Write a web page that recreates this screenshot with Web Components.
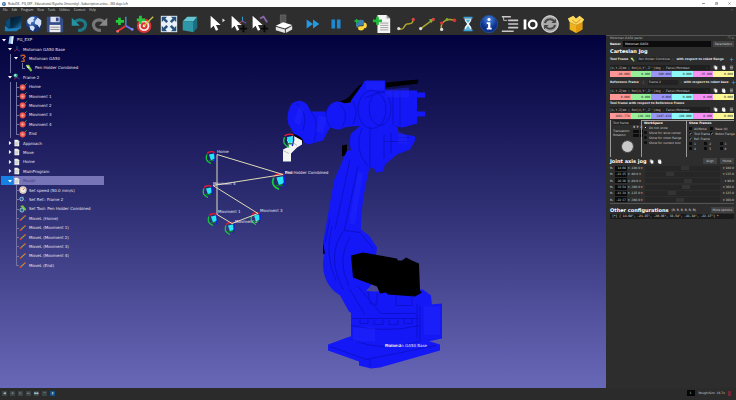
<!DOCTYPE html>
<html lang="en">
<head>
<meta charset="utf-8">
<title>RoboDK</title>
<style>
  html, body { height: 100%; }
  body { margin: 0; background: #2a2a2a; color: #e4e4e4; font: 4px/1 "DejaVu Sans", sans-serif; overflow: hidden; }
</style>
</head>
<body>
<robot-app></robot-app>
<script>
const RESET = `
  * { box-sizing: border-box; }
  button, input, select { font: inherit; color: inherit; margin: 0; padding: 0; border: 0; background: none; border-radius: 0; min-width: 0; }
  select { appearance: none; display: block; }
  svg { display: block; }
`;
function define(name, template) {
  customElements.define(name, class extends HTMLElement {
    connectedCallback() {
      if (this.shadowRoot) return;
      const root = this.attachShadow({ mode: "open" });
      const html = typeof template === "function" ? template(this) : template;
      const [css, markup] = html.split("~~");
      root.innerHTML = `<style>${RESET}${css}</style>${markup}`;
    }
  });
}

const cursor = `<path d="M4 2v14l3.300-3 2.500 5.500 2.600-1.200-2.500-5.300H15z" fill="#fff"/>`;
const page = `<path d="M4 2h9l4 4v14H4z" fill="#f4f4f4"/><path d="M13 2v4h4z" fill="#aaa"/><path d="M6 9h9M6 11.500h9M6 14h9M6 16.500h7" stroke="#999" stroke-width="1"/>`;
const axes = `<path d="M11 12V3" stroke="#39c" stroke-width="1.500"/><path d="M11 12l8 5" stroke="#55f" stroke-width="1.500"/><path d="M11 12l-8 5" stroke="#e33" stroke-width="1.500"/>`;
const ICONS = {
  station: `<defs><linearGradient id="g" x2="1" y2="1"><stop offset="0" stop-color="#02101c"/><stop offset=".6" stop-color="#06304e"/><stop offset="1" stop-color="#2c91cc"/></linearGradient></defs><path d="M3 8l5-4 12-2v14l-4 1-13 1z" fill="url(#g)"/><path d="M3 8l5-4v10l-5 4z" fill="#0b4a75"/><path d="M2 13l4 3 13-1-4 4-13 0z" fill="#1d7db8"/>`,
  globe: `<defs><radialGradient id="g" cx=".4" cy=".3"><stop offset="0" stop-color="#4f86d8"/><stop offset="1" stop-color="#15336f"/></radialGradient></defs><circle cx="11" cy="11" r="9" fill="url(#g)"/><path d="M3.500 7Q6 3 10 3l2 1-2 2 1 2-3 1-1 3-3-2zM12 8l3-4 4 3v4l-2 4-2-3-3-1zM6 13l4 0 2 2-2 4-3-2z" fill="#d5e2f6"/>`,
  save: `<path d="M2 3h15l3 3v14H2z" fill="#354d89"/><path d="M6 3h10v6H6z" fill="#dfe6f2"/><path d="M12 4h3v4h-3z" fill="#354d89"/><path d="M5 12h12v8H5z" fill="#eee"/><path d="M6 14.500h10M6 17h10" stroke="#889"/>`,
  undo: `<path d="M6 9c5-5 13-2 12 4-1 4-4 5-8 5" fill="none" stroke="#1d7888" stroke-width="3.500"/><path d="M3 4v9h9z" fill="#2492a2"/>`,
  redo: `<path d="M16 9C11 4 3 7 4 13c1 4 4 5 8 5" fill="none" stroke="#777" stroke-width="3.500"/><path d="M19 4v9h-9z" fill="#888"/>`,
  frame: `<path d="M13 13V3" stroke="#49c" stroke-width="1.500"/><path d="M13 13l7 4" stroke="#67f" stroke-width="2"/><path d="M13 13l-9 6" stroke="#e33" stroke-width="2"/><path d="M6 4v8M2 8h9" stroke="#25c93c" stroke-width="3"/><circle cx="20" cy="17" r="1.500" fill="#88f"/><circle cx="4" cy="19" r="1.500" fill="#f66"/>`,
  target: `<circle cx="10" cy="13" r="8" fill="#d33"/><circle cx="10" cy="13" r="5.800" fill="#f5e6e6"/><circle cx="10" cy="13" r="3.800" fill="#d33"/><circle cx="10" cy="13" r="1.500" fill="#fff"/><path d="M10 13l10-10" stroke="#c5c540" stroke-width="1.500"/><path d="M6 2v9M2 6.500h9" stroke="#25c93c" stroke-width="3"/>`,
  fit: `<path d="M2 2h18v18H2z" fill="#e8eff6"/><path d="M3 3h6L7 5l3 3-2 2-3-3-2 2zM19 3v6l-2-2-3 3-2-2 3-3-2-2zM3 19v-6l2 2 3-3 2 2-3 3 2 2zM19 19h-6l2-2-3-3 2-2 3 3 2-2z" fill="#26517d"/>`,
  cube: `<path d="M3 8l5-5h11l-4 5z" fill="#63c6d2"/><path d="M3 8h12v12l-12-2z" fill="#2f98a8"/><path d="M15 8l4-5v12l-4 5z" fill="#1b6e7d"/>`,
  select: cursor + `<path d="M17 5l3 2-3 2z" fill="#ddd"/>`,
  moveframe: cursor + `<path d="M16 8V3" stroke="#3ad" /><path d="M16 8l4 2" stroke="#66f"/><path d="M16 8l-4 2" stroke="#e44"/><path d="M17 12v8M13 16h8" stroke="#080808" stroke-width="2"/>`,
  movetool: cursor + `<path d="M12 5l4-2 4 6" stroke="#86a" stroke-width="2" fill="none"/><path d="M17 12v8M13 16h8" stroke="#080808" stroke-width="2"/>`,
  collision: `<path d="M7 1h6v9H7z" fill="#555" stroke="#777" stroke-width=".6"/><path d="M2 13l8-4 10 3-8 4z" fill="#fff"/><path d="M2 14l10 3v4L2 18zM13 17l7-4v4l-7 4z" fill="#e4e4e4"/>`,
  fast: `<path d="M4 6l7 5-7 5zM11 6l7 5-7 5z" fill="#2698de"/>`,
  pause: `<path d="M6 6h4v10H6zM12 6h4v10h-4z" fill="#1f88cf"/>`,
  python: `<g transform="translate(3 3) scale(.8)"><path d="M6 8V6q0-2 4-2t4 2v4q0 2-3 2H8q-2 0-2 3-3 0-3-4t3-3z" fill="#3c7fb1"/><path d="M14 8q4 0 4 4t-4 4v1q0 2-4 2t-4-2v-2q0-2 3-2h3q2 0 2-3z" fill="#fbd43c"/><path d="M4 3v6M1 6h6" stroke="#2b4" stroke-width="2"/></g>`,
  program: `<path d="M6 1h10l4 4v16H6z" fill="#f4f4f4"/><path d="M16 1v4h4z" fill="#999"/><path d="M9 10h9M9 12.500h9M9 15h9M9 17.500h9" stroke="#999"/><path d="M6 3v9M1 7.500h10" stroke="#1fba3a" stroke-width="3"/>`,
  movej: `<path d="M3 16c7 3 5-4 9-5s6 1 7-5" fill="none" stroke="#aba32c" stroke-width="1.700"/><circle cx="3" cy="16" r="1.800" fill="#ddd"/><circle cx="19" cy="6" r="1.800" fill="#d44"/>`,
  movel: `<path d="M4 16L18 6" stroke="#aba32c" stroke-width="1.700"/><circle cx="4" cy="16" r="1.800" fill="#ddd"/><path d="M13 6l6-1-3 5z" fill="#7b3"/><circle cx="18" cy="6" r="1.800" fill="#d44"/>`,
  movec: `<path d="M4 17C2 10 8 4 18 7" fill="none" stroke="#aba32c" stroke-width="1.700"/><circle cx="4" cy="17" r="1.800" fill="#ddd"/><circle cx="4" cy="10" r="1.800" fill="#d33"/><circle cx="10" cy="6" r="1.600" fill="#8a2"/><circle cx="18" cy="7" r="2" fill="#d33"/>`,
  wait: `<path d="M6 3h10v2H6zM6 17h10v2H6z" fill="#3a9fd5"/><path d="M7 5h8q0 3-3 6 3 3 3 6H7q0-3 3-6-3-3-3-6z" fill="#e8f6fd"/><path d="M8 6h6l-3 4zM8 17l3-4 3 4z" fill="#58b5dd"/>`,
  info: `<defs><radialGradient id="g" cy=".25"><stop offset="0" stop-color="#4d88e4"/><stop offset="1" stop-color="#0b2f8e"/></radialGradient></defs><circle cx="11" cy="11" r="9.500" fill="url(#g)" stroke="#24508e"/><circle cx="11" cy="6" r="1.700" fill="#fff"/><path d="M8.500 9H12.500v6h1.500v2H8.500v-2H10v-4H8.500z" fill="#fff"/>`,
  call: `<path d="M2 3h10M9 7h11M9 11h11M9 15h11M2 19h13" stroke="#c9c9c9" stroke-width="1.700"/><path d="M4 3v4l4 0" fill="none" stroke="#c9c9c9"/>`,
  io: `<path d="M4 6h3v11H4z" fill="#fff"/><ellipse cx="14" cy="11.500" rx="4.200" ry="4.200" fill="none" stroke="#fff" stroke-width="2.500"/>`,
  sync: `<circle cx="11" cy="11" r="9.500" fill="#a8a8a8"/><path d="M5.500 10a5.500 5 0 0 1 10-2M16.500 12a5.500 5 0 0 1-10 2" fill="none" stroke="#444" stroke-width="2.200"/><path d="M17.500 5v5h-5zM4.500 17v-5h5z" fill="#444"/><circle cx="11" cy="11" r="9" fill="none" stroke="#ddd"/>`,
  box: `<path d="M4 9l7 3 7-3v8l-7 4-7-4z" fill="#f0b21c"/><path d="M11 12l7-3v8l-7 4z" fill="#e09a12"/><path d="M4 9L2 5l6-3 3 3 4-3 5 4-2 3-7 3z" fill="#ffd75a"/><path d="M7 7l4 3 5-4" stroke="#d18b12" fill="none"/>`,
  root: `<path d="M7 1h11l-2 20H4z" fill="#8cc4ec"/><path d="M13 1h5l-2 20h-5z" fill="#e5f3fc"/>`,
  axes,
  arm: `<path d="M5 4l9-1 3 4-6 5 3 3v5H6" fill="none" stroke="#c4622d" stroke-width="3.500"/><circle cx="6" cy="5" r="2.500" fill="#666"/>`,
  tool: `<path d="M2 3l9-1 9 15-4 4-7-8z" fill="#79c143"/><path d="M3 3l8 5 2 5-7-3z" fill="#dff0cc"/>`,
  frame2: axes + `<circle cx="7" cy="7" r="5.500" fill="#3aa79a"/><circle cx="6" cy="6" r="2.500" fill="#c6eee6"/>`,
  point: `<path d="M15 7l6-6" stroke="#2d4" stroke-width="2"/><circle cx="10" cy="12" r="8.500" fill="#e0443c"/><path d="M6 12h8M10 8v8" stroke="#fbd5d0" stroke-width="1.500"/><circle cx="10" cy="12" r="5" fill="none" stroke="#f7b5b0"/>`,
  page,
  speed: `<circle cx="11" cy="11" r="10" fill="#f3ece4"/><circle cx="11" cy="11" r="8" fill="none" stroke="#d9a37a" stroke-width="1.500"/><path d="M11 11l4-5" stroke="#c33" stroke-width="2"/>`,
  setref: axes + `<circle cx="7" cy="11" r="5" fill="#2b5a90" stroke="#bcd4f0" stroke-width="2"/>`,
  settool: `<path d="M3 3l8-2 9 11-3 4z" fill="#79c143"/><circle cx="8" cy="14" r="5.500" fill="#2b6a90" stroke="#bce8d8" stroke-width="2"/>`,
  line: `<path d="M4 17L17 5" stroke="#b9a52e" stroke-width="3"/><circle cx="4" cy="17" r="2.500" fill="#c43"/><circle cx="17" cy="5" r="2.500" fill="#c43"/>`,
  copy: `<path d="M3 2h10v13H3z" fill="#aaa"/><path d="M8 6h11v14H8z" fill="#fff"/>`,
  paste: `<path d="M4 3h14v16H4z" fill="#ddd"/><path d="M8 1h6v4H8z" fill="#777"/><path d="M10 9h9v12h-9z" fill="#fff"/>`,
  menu: `<path d="M4 5h14M4 11h14M4 17h14" stroke="#bbb" stroke-width="3"/>`,
  chev: `<path d="M4 8l7 7 7-7" fill="none" stroke="#bbb" stroke-width="3"/>`,
  plus: `<path d="M11 3v16M3 11h16" stroke="#3b8fd0" stroke-width="3"/>`,
  down: `<path d="M0 5h22L11 19z" fill="#fff"/>`,
  right: `<path d="M5 0v22l14-11z" fill="#fff"/>`
};
define("app-icon", el => `:host{display:block;flex:none;width:var(--icon,20px);height:var(--icon,20px)} svg{width:100%;height:100%}
  ~~<svg viewBox="0 0 22 22" aria-hidden="true">${ICONS[el.getAttribute("name")]}</svg>`);

define("title-bar", `:host{display:flex;align-items:center;height:7px;background:#fff;color:#222;font:3px/4px "Open Sans","Noto Sans",sans-serif;padding:0 4px 0 2px;gap:2px}
  h1{font:inherit;margin:0;flex:1;white-space:nowrap} .logo{width:4px;height:4px} button{width:5px;height:5px;color:#333} .win{display:flex;gap:8px} .win svg{width:3px;height:3px;margin:auto}
  ~~<svg class="logo" viewBox="0 0 10 10"><circle cx="5" cy="5" r="5" fill="#366d9e"/><path d="M2 3l3 1-1 4zM6 2l3 2-2 3z" fill="#cfe3ef"/></svg>
  <h1>RoboDK - PG_EXP - Educational (Kyushu University) - Subscription active - 365 days left</h1>
  <div class="win"><button aria-label="Minimize"><svg viewBox="0 0 10 10"><path d="M0 5h10" stroke="#555" stroke-width="2"/></svg></button>
  <button aria-label="Restore"><svg viewBox="0 0 10 10"><path d="M1 3h6v6H1zM3 3V1h6v6H7" fill="none" stroke="#555" stroke-width="1.500"/></svg></button>
  <button aria-label="Close"><svg viewBox="0 0 10 10"><path d="M1 1l8 8M9 1L1 9" stroke="#555" stroke-width="1.500"/></svg></button></div>`);

define("menu-bar", `:host{display:flex;align-items:center;height:6px;background:#2e2e2e;color:#ddd;font:3px/4px "Open Sans","Noto Sans",sans-serif;padding:0 3px;gap:4px}
  button:last-child{margin-left:auto;color:#888}
  ~~${["File","Edit","Program","View","Tools","Utilities","Connect","Help"].map(t => `<button>${t}</button>`).join("")}<button aria-label="Close view">×</button>`);

define("tool-group", `:host{display:flex;gap:var(--gap,1px);flex:none}~~<slot></slot>`);
define("tool-button", el => `:host{display:block} button{display:block} 
  ~~<button aria-label="${el.getAttribute("icon")}"><app-icon name="${el.getAttribute("icon")}"></app-icon></button>`);
const group = (names, space, gap = 1) => `<tool-group style="margin-left:${space}px;--gap:${gap}px">${names.split(" ").map(n => `<tool-button icon="${n}"></tool-button>`).join("")}</tool-group>`;
define("tool-bar", `:host{display:flex;align-items:center;height:22px;background:#2e2e2e}
  ~~${group("station globe save",3)}${group("undo redo",4)}${group("frame target",4)}${group("fit cube",4)}${group("select moveframe movetool",7)}${group("collision",5)}${group("fast",9)}${group("pause",3)}${group("python program",5)}${group("movej movel movec",4)}${group("wait info",0)}${group("call io sync",1,0)}${group("box",6)}`);

define("tree-row", el => {
  const level = +el.getAttribute("level"), open = el.getAttribute("state"), last = el.hasAttribute("last");
  const col = n => `<i class="${n}"></i>`;
  let lead = "";
  for (let i = 1; i < level; i++) lead += col((el.getAttribute("rails") || "")[i - 1] === "1" ? "rail" : "");
  return `:host{display:flex;align-items:center;min-height:0;--icon:8px;white-space:nowrap;color:#e6e6f4}
  i,b{display:block;width:6px;align-self:stretch;flex:none;position:relative}
  .rail::before,.leaf::before{content:"";position:absolute;left:3px;top:0;bottom:0;border-left:1px solid #7474a4}
  .end::before{bottom:50%} .leaf::after{content:"";position:absolute;left:3px;right:0;top:50%;border-top:1px solid #7474a4}
  b{display:grid;place-items:center;--icon:4px} span{padding-left:2px}
  :host([selected]){background:linear-gradient(90deg,#1681e2 0 12px,#7774b8 12px);color:#404080;width:103px}
  ~~${lead}${open ? `<b><app-icon name="${open}"></app-icon></b>` : `<i class="leaf ${last ? "end" : ""}"></i>`}<app-icon name="${el.getAttribute("icon")}"></app-icon><span><slot></slot></span>`;
});
const row = (level, icon, text, state = "", extra = "") => `<tree-row role="treeitem" level="${level}" icon="${icon}" ${state ? `state="${state}"` : ""} ${extra}>${text}</tree-row>`;
define("station-tree", `:host{display:grid;grid-auto-rows:1fr;height:235px;padding-left:1px;width:120px;font:4px/5px "DejaVu Sans",sans-serif}
  ~~${row(1,"root","PG_EXP","down")}${row(2,"axes","Motoman GA50 Base","down")}${row(3,"arm","Motoman GA50","down",'rails="01"')}${row(4,"tool","Pen Holder Combined","",'rails="010" last')}
  ${row(2,"frame2","Frame 2","down")}${["Home","Movment 1","Movment 2","Movment 3","Movment 4"].map(t => row(3,"point",t,"",'rails="01"')).join("")}${row(3,"point","End","",'rails="01" last')}
  ${row(2,"page","Approach","right")}${row(2,"page","Move","right")}${row(2,"page","Home","right")}${row(2,"page","MainProgram","right")}${row(2,"page","Rough","down","selected")}
  ${row(3,"speed","Set speed (50.0 mm/s)")}${row(3,"setref","Set Ref.: Frame 2")}${row(3,"settool","Set Tool: Pen Holder Combined")}
  ${["Home","Movment 1","Movment 2","Movment 3","Movment 4"].map(t => row(3,"line",`MoveL (${t})`)).join("")}${row(3,"line","MoveL (End)","","last")}`);

const marker = (x, y, s = 1) => `<g transform="translate(${x} ${y}) scale(${s})" fill="none"><path d="M-2-3L3-4l1 5-4 2z" fill="#26e6f4"/><path d="M-4-3q-3 6 4 9" stroke="#17c83c" stroke-width="1.300"/><path d="M-4-4q3-3 8-1" stroke="#ec1830" stroke-width="1.300"/><path d="M4-5q1 5-1 10" stroke="#1220d4" stroke-width="1.300"/><path d="M-2 3l5 0" stroke="#0a7a2c" stroke-width="1.200"/></g>`;
define("robot-view", `:host{display:block;width:100%;height:100%} svg{width:100%;height:100%;font:4px "DejaVu Sans",sans-serif} text{fill:#e8e8f4}
  ~~<svg viewBox="0 35 606 352" preserveAspectRatio="xMidYMid meet" role="img" aria-label="Robot station">
  <g fill="#1418f6">
    <path d="M339 101q9-2 13-8 7-10 16-12l-1 9-16 11-10 5z" fill="#000"/>
    <path d="M342 145l5-1v10l-5 2z" fill="#000"/>
    <path d="M323 244l4-2v14l-4-3z" fill="#000"/>
    <path d="M347 150l-13 30-11 62 6 34 34 2-2-47q-1-24 8-62l2-20z"/>
    <path d="M365 80h20v10h32v33l-14 4-14-2-24 2-14-7v-20l10-14z"/>
    <path d="M414 92h11v5h-11zM413 111h12v5h-12z"/>
    <path d="M386 82l32-3v4l-32 4z" fill="#000"/>
    <path d="M332 104l20-2 14-5v28l-15 1-15 2-12-2z"/>
    <path d="M292 103q8-6 15 1l4 7 14 0 6 14-8 15-15 4-11-6-9-15q-2-12 4-20z"/>
    <ellipse cx="338" cy="115" rx="12" ry="14"/><ellipse cx="376" cy="108" rx="18" ry="21"/>
    <path d="M351 133l12-10h25l10 4v6l13 2 4 1v4l-5 9-13 5-12 10-2 7-7 1-2-4-12-4q-16-12-11-31z"/>
    <ellipse cx="350" cy="264" rx="27" ry="33"/><path d="M346 231l15-2 8 6 8 12-3 25z"/>
    <path d="M339 293l10 18 7 5h64l12-11-1-10-8-6-49 2-25-2z"/>
    <path d="M418 305l24-2v35l-24 5z"/><path d="M351 312h70v31h-70z"/>
    <path d="M328 344l22-8 70 2 20 6v6l-60 17-9 1-12-3 0-4-31-11z"/>
  </g>
  <path d="M351 255l12-3 34 6 1 2 4 0 4-3 6 3 7 3 1 27 2 2-7 4-27-2-2-2-6 1-3-7-24-9z" fill="#000"/>
  <g fill="none" stroke="#0d10cc" stroke-width="1">
    <ellipse cx="380" cy="108" rx="11" ry="17"/><ellipse cx="372" cy="109" rx="14" ry="19"/><path d="M340 104q10 9 2 23M353 101q6 10 0 23M330 104q-8 10 0 22M311 111q9 10 3 30M296 103q13 8 7 27M393 90v34M400 90v35M365 97l22-7"/>
    <path d="M362 127q-9 22 6 39M370 126v42M384 134v24M391 132v21M384 141h23M398 137h12"/>
    <path d="M350 159l-15 70M358 166l-14 65M332 226q-8 28 4 54M343 231q-17 25 0 58M350 236q-14 24-1 50M345 230l15 2 13 16M330 218l-5 25"/>
    <path d="M350 289l15 25M357 285l24 28h35M368 291l2 12 7 1v-11M396 295v10h16v-10M352 318h67M351 325q34 8 69 0M360 318v5h8v-5M374 319v5h9v-5M389 319v5h9v-5M404 318v5h8v-5M351 339q33 14 70 1M420 305v34M330 346l36 13 70-14M370 358v8M417 303v35"/>
  </g>
  <g fill="#2428ff" opacity=".4"><path d="M366 81h18v8h-18zM385 89l24-2v10h-24zM358 170l5 3-8 51-6-1zM398 130l9 5v8h-9zM353 327h22v14h-22zM424 306h16v28h-16zM319 115l8 2-4 16-7-2zM299 105l5 3-4 17-6-3z"/></g>
  <ellipse cx="297" cy="138" rx="7" ry="3" transform="rotate(32 297 138)" fill="#000"/>
  <path d="M287 139l6-4 9 5 0 4-5 3-6 6v8h-8v-12l6-3z" fill="#f4f4f4"/><path d="M289 139l8 6M283 150l6 3" stroke="#bbb" fill="none"/>
  ${marker(289,140,1.1)}
  ${marker(211,157)}${marker(208,191)}${marker(213,219)}${marker(230,228)}${marker(256,218)}${marker(279,181,1.3)}
  <path d="M217 154l66 20-70 11 45 28-26 10-15-9z" fill="none" stroke="#dedcb4" stroke-width="1"/>
  <text x="217" y="152">Home</text><text x="213" y="184">Movment 4</text><text x="218" y="212">Movment 1</text><text x="235" y="222">Movment 2</text><text x="260" y="211">Movment 3</text>
  <text x="285" y="173">End</text><text x="285" y="173">Pen Holder Combined</text><text x="385" y="346">Frame 2</text><text x="385" y="346">Motoman GA50 Base</text>
  </svg>`);

define("pose-fields", el => `:host{display:grid;gap:1px}
  .head{display:flex;align-items:center;gap:3px;height:5px;--icon:5px} .fmt{flex:1;display:flex;align-items:center;background:#1f1f1f;height:5px;--icon:2px;padding-right:2px} select{flex:1;height:5px;color:#ccc;font-family:"DejaVu Sans Mono",monospace;font-size:3px;white-space:nowrap;overflow:hidden}
  .vals{display:grid;grid-template-columns:repeat(6,1fr);height:6px} .vals input{color:#222;text-align:right;padding-right:1px;font:3px/6px "DejaVu Sans Mono",monospace;width:100%;height:6px}
  ~~<div class="head"><div class="fmt"><select aria-label="Pose format"><option>[X,Y,Z]mm | Rot[X,Y',Z'']deg - Fanuc/Motoman</option></select><app-icon name="chev"></app-icon></div><app-icon name="copy"></app-icon><app-icon name="paste"></app-icon><app-icon name="menu"></app-icon></div>
  <div class="vals">${el.getAttribute("values").split(",").map((v, i) => `<input aria-label="${["X","Y","Z","rX","rY","rZ"][i]}" value="${v}" style="background:${["#ff9696","#96f09a","#9896f8","#8cf8f8","#f890f4","#fcf896"][i]}">`).join("")}</div>`);

define("frame-choice", el => `:host{display:flex;align-items:center;height:6px;font-weight:bold;--icon:5px;gap:2px;white-space:nowrap} label{display:flex;align-items:center;gap:2px} select{width:var(--w);height:5px;font-weight:normal;color:#ccc;background:#222;padding-left:1px} .add{margin-left:auto} .c{--icon:2px} 
  ~~<label>${el.getAttribute("label")} <app-icon name="${el.getAttribute("icon")}"></app-icon><select style="--w:${el.getAttribute("w")}px"><option>${el.getAttribute("value")}</option></select></label><app-icon class="c" name="chev"></app-icon><span><slot></slot></span><app-icon class="add" name="plus"></app-icon>`);

const tick = (type, label, on) => `<label><input type="${type}" name="w" ${on ? "checked" : ""}>${label}</label>`;
define("jog-options", `:host{display:grid;grid-template-columns:31px 45px 1fr;height:37px;font-size:3px;line-height:4px;color:#ccc}
  section{padding:0 0 0 2px;border-left:1px solid #999;min-width:0} section:first-child{border:0;padding:0} h3{font-size:3px;line-height:4px;margin:0;color:#fff}
  label{display:flex;align-items:center;gap:2px;white-space:nowrap} input{appearance:none;width:3px;height:3px;background:#0c0c0c;flex:none}
  input[type=checkbox]{display:grid;place-items:center} input[type=checkbox]:checked::before{content:"✓";font-size:4px;line-height:3px;color:#fff}
  input[type=radio]{border-radius:50%} input[type=radio]:checked{background:#eee;border:1px solid #111}
  .work label{height:5px} .work,.show{border-top:1px solid #999} .show{display:grid;grid-template-columns:1fr 1fr;align-content:start;grid-auto-rows:5px}.show h3{grid-column:1/-1}
  .nums{grid-column:1/-1;display:grid;grid-template-columns:repeat(3,1fr);grid-auto-rows:5px}
  table{border-spacing:0;width:30px} td,th{padding:0;font-weight:bold;text-align:center;height:4px} th:first-child{text-align:left;font-weight:normal} td input{margin:auto}
  .sel{display:flex;align-items:center;--icon:2px;justify-content:space-between;background:#222;height:5px} .sel select{flex:1}
  .knob{width:13px;height:13px;border-radius:50%;background:#c9c9c9;border:1px dotted #777;margin:3px 0 0 8px;background-clip:padding-box}
  ~~<section><div class="sel"><select aria-label="Jog frame"><option>Tool frame</option></select><app-icon name="chev"></app-icon></div>
  <table><tr><th></th><th>X</th><th>Y</th><th>Z</th></tr>${["Translation","Rotation"].map(t => `<tr><th>${t}</th>${["X","Y","Z"].map(a => `<td><input type="checkbox" aria-label="${t} ${a}"></td>`).join("")}</tr>`).join("")}</table><div class="knob"></div></section>
  <section class="work"><h3>WorkSpace</h3>${tick("radio","Do not show",1)}${tick("radio","Show for wrist center")}${tick("radio","Show for robot flange")}${tick("radio","Show for current tool")}</section>
  <section class="show"><h3>Show Frames</h3>${tick("checkbox","All/None")}${tick("checkbox","Base (0)")}${tick("checkbox","Tool Frame",1)}${tick("checkbox","Robot Flange",1)}${tick("checkbox","Ref. Frame",1)}<span></span><div class="nums">${[1,2,3,4,5,6].map(n => tick("checkbox",n)).join("")}</div></section>`);

const JOINTS = [["14.68",-180,180],["-21.15",-90,135],["20.36",-80,90],["33.54",-360,360],["-41.34",-125,125],["-22.17",-360,360]];
define("joint-rows", `:host{display:grid;grid-auto-rows:1fr;height:39px;font:3px/4px "DejaVu Sans",sans-serif;color:#ccc;border-bottom:1px solid #555}
  div{display:grid;grid-template-columns:4px 12px 16px 1fr 13px;gap:1px;align-items:center} .v{background:#0c0c0c;text-align:right;height:5px;width:100%;padding-right:1px}
  output{white-space:nowrap;text-align:right} output:first-of-type{text-align:left}
  input[type=range]{appearance:none;width:100%;height:5px;background:#262626} input[type=range]::-webkit-slider-thumb{appearance:none;width:8px;height:4px;background:#343434}
  ~~${JOINTS.map(([v, a, b], i) => `<div><label for="j${i}">θ${"₁₂₃₄₅₆"[i]}</label><input class="v" id="j${i}" value="${v}"><output>▾ ${a.toFixed(1)} ▾</output><input type="range" aria-label="Joint ${i + 1}" min="${a}" max="${b}" value="${v}"><output>▾ ${b.toFixed(1)}</output></div>`).join("")}`);

define("robot-panel", `:host{display:flex;flex-direction:column;background:#2d2d2d;padding:0 2px 0 4px;font:3px/4px "DejaVu Sans",sans-serif;border-top:1px solid #555}
  h2{margin:0;font-size:5px;line-height:6px;color:#fff} .dock{display:flex;justify-content:space-between;color:#bbb;height:5px;line-height:4px}
  .name{display:flex;align-items:center;gap:2px;height:6px} .name label{font-weight:bold;color:#fff} .name input{flex:1;height:6px;background:#0c0c0c;padding-left:2px}
  button{background:#414141;height:6px;padding:0 2px;white-space:nowrap;color:#ccc} h2.c{margin:1px 0 2px}
  pose-fields{margin-top:3px} frame-choice{margin-top:2px} .rel{font-weight:bold;height:4px;margin-top:1px;white-space:nowrap} .rel+pose-fields{margin-top:2px} jog-options{margin-top:1px}
  .bar{display:flex;align-items:center;gap:3px;--icon:5px;height:8px} .bar .r{margin-left:auto} .bar button{min-width:14px} .other{margin-top:2px}
  .list{background:#1a1a1a;height:5px;white-space:nowrap;overflow:hidden;font:3px/5px "DejaVu Sans Mono",monospace;padding-left:2px}
  .first{margin-top:0}
  ~~<div class="dock"><span>Motoman GA50 panel</span><span>❐ ×</span></div>
  <div class="name"><label for="n">Name:</label><input id="n" value="Motoman GA50"><button>Parameters</button></div>
  <h2 class="c">Cartesian Jog</h2>
  <frame-choice class="first" label="Tool Frame" icon="tool" value="Pen Holder Combined" w="33">with respect to robot flange</frame-choice>
  <pose-fields values="-80.000,0.000,300.000,0.000,-35.000,0.000"></pose-fields>
  <frame-choice label="Reference Frame" icon="axes" value="Frame 2" w="30">with respect to robot base</frame-choice>
  <pose-fields values="0.000,0.000,0.000,0.000,0.000,0.000"></pose-fields>
  <div class="rel">Tool frame with respect to Reference Frame</div>
  <pose-fields values="1683.779,120.389,1497.839,-180.000,0.000,0.000"></pose-fields>
  <jog-options></jog-options>
  <div class="bar"><h2>Joint axis jog</h2><app-icon name="copy"></app-icon><app-icon name="paste"></app-icon><button class="r">Align</button><button>Home</button></div>
  <joint-rows></joint-rows>
  <div class="bar other"><h2>Other configurations</h2><span>(R, R, R, R, R, R)</span><button class="r">More options</button></div>
  <div class="list">[*] [ 14.68°, -21.15°, -20.36°, 33.54°, -41.34°, -22.17°] *</div>`);

define("status-bar", `:host{display:flex;align-items:center;gap:3px;height:12px;background:#2b2b2b;padding:0 5px 2px 2px;font:3px/4px "DejaVu Sans",sans-serif;color:#ccc}
  button{width:5px;height:5px;background:#3c4444;font-size:3px;line-height:5px} .on{background:#14508c} .r{margin-left:auto;background:#050505;width:8px;height:6px;padding-left:2px} .end{background:#702a35;width:3px}
  ~~${["◀","▫","▷","▹▹","▶▶","◠"].map((t, i) => `<button aria-label="Control ${i + 1}">${t}</button>`).join("")}<button class="on" aria-label="Toggle">▮</button><input class="r" aria-label="Step" value="1"><span>Rough/Sim: 16.7x</span><button class="end" aria-label="Stop"></button>`);

define("robot-app", `:host{display:grid;grid-template-rows:auto auto auto 1fr auto;height:100vh;background:#2b2b2b}
  main{display:grid;grid-template-columns:minmax(0,1fr) 130px;min-height:0} .stage{display:grid;background:linear-gradient(#02023e,#28286c 42%,#6868b8);min-height:0;overflow:hidden}
  .stage>*{grid-area:1/1} station-tree{align-self:start}
  ~~<title-bar></title-bar><menu-bar></menu-bar><tool-bar></tool-bar><main><div class="stage"><robot-view></robot-view><station-tree role="tree"></station-tree></div><robot-panel></robot-panel></main><status-bar></status-bar>`);
</script>
</body>
</html>
